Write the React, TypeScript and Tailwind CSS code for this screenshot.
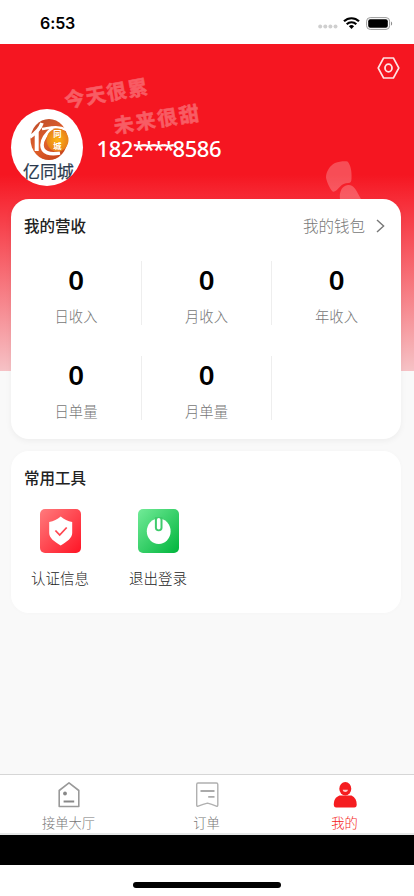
import type { ReactNode } from 'react'

// Page « Mon compte » du livreur

const revenus = [
  { label: '日收入', valeur: 0 },
  { label: '月收入', valeur: 0 },
  { label: '年收入', valeur: 0 },
  { label: '日单量', valeur: 0 },
  { label: '月单量', valeur: 0 },
]

function BarreStatut() {
  return (
    <div className="flex h-11 shrink-0 items-center justify-between bg-white pl-[40px] pr-[21px] pt-[2px]">
      <span className="font-['Inter'] text-[16px] font-semibold tracking-[-0.1px] text-black">6:53</span>
      <div className="flex items-center">
        <svg className="mr-[5px] mt-[7px]" width="20" height="5" viewBox="0 0 20 5" fill="#cfcfcf">
          <circle cx="2.2" cy="2.5" r="2" />
          <circle cx="7.3" cy="2.5" r="2" />
          <circle cx="12.4" cy="2.5" r="2" />
          <circle cx="17.5" cy="2.5" r="2" />
        </svg>
        <svg width="17" height="12" viewBox="0 0 17 12" fill="none" stroke="#000" strokeWidth="2.2">
          <path d="M1 4.3a10.8 10.8 0 0 1 15 0" />
          <path d="M3.7 7.2a6.9 6.9 0 0 1 9.6 0" />
          <path d="M8.5 11.9 5.9 9.3a3.8 3.8 0 0 1 5.2 0z" fill="#000" stroke="none" />
        </svg>
        <svg className="ml-[6px]" width="27" height="13" viewBox="0 0 27 13">
          <rect x="0.6" y="0.6" width="23" height="11.8" rx="3.6" fill="none" stroke="#9b9b9b" strokeWidth="1" />
          <rect x="2.2" y="2.2" width="19.6" height="8.6" rx="2" fill="#000" />
          <path d="M25 4.4c1.5.6 1.5 3.6 0 4.2z" fill="#8f8f8f" />
        </svg>
      </div>
    </div>
  )
}

function Avatar() {
  return (
    <div className="h-[77px] w-[72px] shrink-0 overflow-hidden rounded-[50%] bg-white">
      <svg width="72" height="77" viewBox="0 0 72 77">
        <defs>
          <linearGradient id="anneau" x1="0" y1="0" x2="0.6" y2="1">
            <stop offset="0" stopColor="#b94a2c" />
            <stop offset="0.6" stopColor="#e0602a" />
            <stop offset="1" stopColor="#c9471c" />
          </linearGradient>
          <radialGradient id="soleil">
            <stop offset="0" stopColor="#fdb515" />
            <stop offset="1" stopColor="#e8811a" />
          </radialGradient>
        </defs>
        <ellipse cx="38" cy="30.5" rx="18.5" ry="20.5" fill="url(#anneau)" />
        <g fill="none" stroke="#fff">
          <path d="M31 14c-2 6-6 10-12 14" strokeWidth="3.600" />
          <path d="M25.700 22v20" strokeWidth="4" />
          <path d="M31 20c8-1 14-4 25 1" strokeWidth="2.600" />
          <path d="M42 19c-6 5-11 10-11 17 0 8 8 10 18 8" strokeWidth="3.600" />
        </g>
        <ellipse cx="46.500" cy="31" rx="11" ry="11.500" fill="url(#soleil)" />
        <g fontSize="8.300" fontWeight="700" fill="#fff" textAnchor="middle">
          <text x="46.500" y="28">同</text>
          <text x="46.500" y="40">城</text>
        </g>
        <text x="12" y="68.500" fontSize="17" fill="#2b3a4e" stroke="#2b3a4e" strokeWidth="0.200">亿同城</text>
      </svg>
    </div>
  )
}

function Carte({ className, children }: { className: string; children: ReactNode }) {
  return (
    <section className={`relative ml-[11px] mr-[13px] shrink-0 rounded-[18px] bg-white ${className}`}>
      {children}
    </section>
  )
}

function Entete() {
  return (
    <header className="relative h-[155px] shrink-0">
      <svg className="absolute left-0 top-0" width="414" height="155" viewBox="0 0 414 155" fill="#fff">
        <g opacity="0.3" fontWeight="700" fontSize="20" stroke="#fff" strokeWidth="0.500" strokeLinejoin="round">
          <text transform="translate(66 64) rotate(-10)" textLength="84">今天很累</text>
          <text transform="translate(115 89.500) rotate(-9)" textLength="86">未来很甜</text>
        </g>
        <g fillOpacity="0.24">
          <path d="M326 133.500c0-6 4-12 9-14.500 4-1.500 9-2 12.500-1.500 3 3 4.500 10 4 17 0 3-1 4.500-3 4.600-4 .2-6 1-8.500 3.600-2.500 2.600-5 5.500-7 5-2-.5-6.500-10-7-14.200z" />
          <path d="M340 155c-1-7 2-13.500 8-14 6-.5 8 5 13 14z" />
        </g>
      </svg>
      <svg className="absolute left-[377px] top-[12px]" width="23" height="24" viewBox="0 0 23 24" fill="none" stroke="#fff" strokeOpacity="0.88">
        <path d="M6.6 2h9.8l5.4 10-5.4 10H6.6L1.2 12z" strokeWidth="1.6" strokeLinejoin="round" />
        <ellipse cx="11.5" cy="12" rx="3.5" ry="3.8" strokeWidth="1.8" />
      </svg>
      <div className="flex items-center pl-[11px] pt-[65px]">
        <Avatar />
        <span className="relative ml-[13.500px] font-['Noto_Sans'] text-[22px] font-medium leading-[30px] tracking-[-0.400px] text-white">
          182<span className="tracking-[-2.200px]">****</span>8586
        </span>
      </div>
    </header>
  )
}

function CarteRevenus() {
  return (
    <Carte className="h-[240px] shadow-[0_2px_6px_rgba(0,0,0,0.05)]">
      <div className="flex h-[53px] items-center justify-between pl-[13px] pr-[16px]">
        <h2 className="text-[15.5px] font-medium text-[#222]">我的营收</h2>
        <div className="flex items-center gap-[11px] text-[#777]">
          <span className="text-[15.5px] font-light">我的钱包</span>
          <svg width="9" height="14" viewBox="0 0 9 14" fill="none" stroke="currentColor" strokeWidth="1.4">
            <path d="M1 1l6.6 6L1 13" />
          </svg>
        </div>
      </div>
      <div className="grid grid-cols-[131px_130px_1fr] gap-y-[31px] pt-[9px]">
        {revenus.map((r, i) => (
          <div
            key={r.label}
            className={`flex h-[64px] flex-col items-center ${i % 3 < 2 ? 'border-r border-[#eee]' : ''}`}
          >
            <span className="font-['Noto_Sans'] text-[27.500px] font-semibold leading-[37px] text-black">{r.valeur}</span>
            <span className="mt-[8px] text-[14.3px] font-light leading-[20px] text-[#777]">{r.label}</span>
          </div>
        ))}
      </div>
    </Carte>
  )
}

function IconeCertification() {
  return (
    <svg width="41" height="44" viewBox="0 0 41 44">
      <defs>
        <linearGradient id="rouge" x1="0" y1="0" x2="1" y2="1">
          <stop stopColor="#ff7b7d" />
          <stop offset="1" stopColor="#ff1425" />
        </linearGradient>
      </defs>
      <rect width="41" height="44" rx="5" fill="url(#rouge)" />
      <path d="M20.700 7.500c3.500 3 7 4.500 11.500 5.500v11c0 5-5 8.500-11.500 12.500C14.200 32.500 9.200 29 9.200 24V13c4.500-1 8-2.500 11.500-5.500z" fill="#fff" />
      <path d="M15.400 21.500l4.300 4.500 7-7.500" fill="none" stroke="#ff4650" strokeWidth="1.800" />
    </svg>
  )
}

function IconeDeconnexion() {
  return (
    <svg width="41" height="44" viewBox="0 0 41 44">
      <defs>
        <linearGradient id="vert" x1="0" y1="0" x2="1" y2="1">
          <stop stopColor="#72eb98" />
          <stop offset="1" stopColor="#00b53c" />
        </linearGradient>
      </defs>
      <rect width="41" height="44" rx="5" fill="url(#vert)" />
      <ellipse cx="20.700" cy="22.300" rx="11.900" ry="12.700" fill="#fff" />
      <path d="M16.900 8h7.600v10.500a3.800 3.800 0 0 1-7.600 0z" fill="#3fcb6c" />
      <path d="M20.700 10.800v8" stroke="#fff" strokeWidth="3.600" strokeLinecap="round" />
    </svg>
  )
}

function CarteOutils() {
  return (
    <Carte className="mt-[12px] h-[162px] shadow-[0_0_5px_rgba(0,0,0,0.02)]">
      <h2 className="pl-[13px] pt-[14px] text-[15.5px] font-medium leading-[24px] text-[#222]">常用工具</h2>
      <div className="flex pt-[20px]">
        <div className="flex w-[98px] flex-col items-center gap-[14px]">
          <IconeCertification />
          <span className="text-[14.500px] leading-[22px] font-light text-[#222]">认证信息</span>
        </div>
        <div className="flex w-[98px] flex-col items-center gap-[14px]">
          <IconeDeconnexion />
          <span className="text-[14.500px] leading-[22px] font-light text-[#222]">退出登录</span>
        </div>
      </div>
    </Carte>
  )
}

function Onglet({ label, actif = false, children }: { label: string; actif?: boolean; children: ReactNode }) {
  return (
    <div className={`flex flex-1 flex-col items-center pt-[6px] ${actif ? 'text-[#f51d20]' : 'text-[#777]'}`}>
      <svg width="26" height="28" viewBox="0 0 26 28" fill="none" stroke="#999" strokeWidth="1.400">
        {children}
      </svg>
      <span className="mt-[4px] mr-[1px] text-[13.300px] font-light leading-[20px]">{label}</span>
    </div>
  )
}

function BarreOnglets() {
  return (
    <nav className="flex h-[61px] shrink-0 border-b-2 border-t border-b-[#e6e8e8] border-t-[#d6d6d6] bg-white">
      <Onglet label="接单大厅">
        <path d="M3.200 9.500L13 1.800l9.800 7.700v16H3.200z" strokeWidth="1.600" strokeLinejoin="round" />
        <circle cx="9" cy="12.500" r="1.900" fill="#888" stroke="none" />
        <path d="M7.600 20.500h10.600" stroke="#888" strokeWidth="2" />
      </Onglet>
      <Onglet label="订单">
        <path d="M4 2h18.400q1.400 0 1.400 1.600v20.500q0 1.600-1.500 1-4.700-2-8.800-3-4.100 1-9.300 3-1.500.6-1.500-1V3.600Q2.700 2 4 2z" stroke="#b0b0b0" />
        <path d="M6.500 10h14M14.200 15.800h6.300" strokeWidth="1.800" stroke="#aaa" />
      </Onglet>
      <Onglet label="我的" actif>
        <g fill="#f51d20" stroke="none">
          <ellipse cx="13.300" cy="7.700" rx="6" ry="6.700" />
          <path d="M7.500 14.500h12c3.500 1.500 5.200 4.500 5.200 9 0 2-.7 3-2.500 3H4.300c-1.800 0-2.500-1-2.500-3 0-4.500 1.700-7.500 5.700-9z" />
        </g>
        <path d="M10.700 8.800h5.200c-.3 3-4.900 3-5.200 0z" fill="#ffc9c9" stroke="none" />
      </Onglet>
    </nav>
  )
}

export default function App() {
  return (
    <div className="flex h-[896px] w-[414px] flex-col overflow-hidden bg-white font-['Noto_Sans_CJK_SC',sans-serif]">
      <BarreStatut />
      <main className="flex h-[730px] shrink-0 flex-col bg-[#f9f9f9] bg-[linear-gradient(#f51621_0%,#f51621_40%,#f72d38_48%,#f6c2c6_100%)] bg-[length:100%_327px] bg-no-repeat">
        <Entete />
        <CarteRevenus />
        <CarteOutils />
      </main>
      <BarreOnglets />
      <div className="h-[30px] shrink-0 bg-black" />
      <div className="flex flex-1 justify-center pt-[17px]">
        <div className="h-[6px] w-[148px] rounded-full bg-black" />
      </div>
    </div>
  )
}
